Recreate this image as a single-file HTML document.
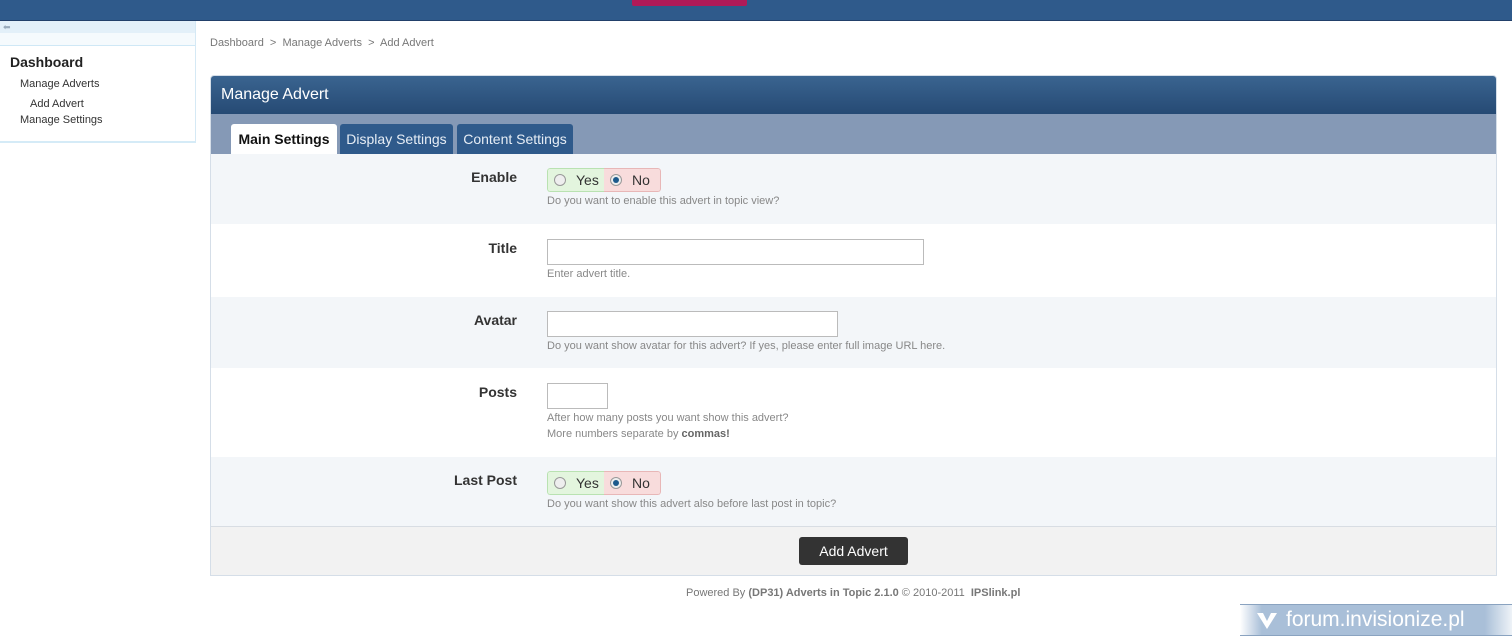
<!DOCTYPE html>
<html><head><style>
*{margin:0;padding:0;box-sizing:border-box}
body{width:1512px;height:638px;overflow:hidden;background:#fff;font-family:"Liberation Sans",Arial,sans-serif;position:relative;color:#333}
.top{position:absolute;left:0;top:0;width:1512px;height:21px;background:#2f5a8b;border-bottom:1px solid #22406a}
.pink{position:absolute;left:632px;top:0;width:115px;height:6px;background:#b01a58;border-radius:0 0 2px 2px}
.side{position:absolute;left:0;top:21px;width:196px;height:122px;border-right:1px solid #d5e9f5;border-bottom:2px solid #d5ebf7}
.strip{height:12px;background:#e3f0f9;font-size:9px;color:#9ab;padding-left:3px;line-height:12px}
.strip2{height:13px;background:#f5fafd;border-bottom:1px solid #cfe8f6}
.side h3{font-size:14px;font-weight:bold;margin:8px 0 0 10px;color:#222}
.side a{display:block;font-size:11px;color:#333;text-decoration:none}
.crumb{position:absolute;left:210px;top:37px;font-size:11px;color:#777}
.panel{position:absolute;left:210px;top:75px;width:1287px;height:501px;border:1px solid #d5dee8;border-radius:4px 4px 0 0;overflow:hidden}
.hd{height:38px;background:linear-gradient(#3a6490,#264a74);color:#fff;font-size:16px;line-height:38px;padding-left:10px}
.tabs{height:40px;background:#8599b6;position:relative}
.tab{position:absolute;top:10px;height:30px;border-radius:3px 3px 0 0;background:#2f5a8b;color:#e6edf5;font-size:14px;line-height:30px;text-align:center}
.tab.on{background:#fff;color:#111;font-weight:bold}
.row{position:relative;border-bottom:1px solid #fff}
.row.l{background:#f3f6f9}
.lab{position:absolute;right:979px;top:15px;font-size:14px;font-weight:bold;color:#333}
.fld{position:absolute;left:336px;top:14px}
.desc{font-size:11px;color:#888;margin-top:1px;line-height:16px}
.yn{display:flex;height:24px;border-radius:3px;overflow:hidden;width:114px;font-size:14px}
.yn div{display:flex;align-items:center;height:24px}
.y{background:#e3f5de;border:1px solid #b9e2b1;border-right:none;width:57px;border-radius:3px 0 0 3px}
.n{background:#f8dcdc;border:1px solid #e8b7b7;border-left:none;width:57px;border-radius:0 3px 3px 0}
.r{width:12px;height:12px;border-radius:50%;border:1px solid #999;background:#eee;margin:0 10px 0 6px;position:relative}
.r.c::after{content:"";position:absolute;left:2px;top:2px;width:6px;height:6px;border-radius:50%;background:#1c5a8c}
input{display:block;height:26px;border:1px solid #bbb;background:#fff}
.foot{position:absolute;left:0;top:450px;width:100%;height:50px;background:#f2f2f2;border-top:1px solid #d8dde3}
.btn{position:absolute;left:588px;top:10px;width:109px;height:28px;background:#333;border-radius:3px;color:#fff;font-size:14px;text-align:center;line-height:28px}
.pw{position:absolute;left:686px;top:587px;font-size:11px;color:#777}
.logo{position:absolute;left:1240px;top:604px;width:272px;height:32px;background:linear-gradient(90deg,rgba(160,185,210,0),#a9bfd8 8%,#a9bfd8 90%,rgba(200,215,230,.3));border-top:1px solid #8aa3c0;border-bottom:1px solid #8aa3c0;color:#fff;font-size:21px;line-height:30px;padding-left:46px}
</style></head><body>
<div class="top"><div class="pink"></div></div>
<div class="side"><div class="strip">&#x2B05;</div><div class="strip2"></div>
<h3>Dashboard</h3>
<a style="margin:8px 0 0 20px">Manage Adverts</a>
<a style="margin:8px 0 0 30px">Add Advert</a>
<a style="margin:4px 0 0 20px">Manage Settings</a></div>
<div class="crumb">Dashboard &nbsp;&gt;&nbsp; Manage Adverts &nbsp;&gt;&nbsp; Add Advert</div>
<div class="panel">
<div class="hd">Manage Advert</div>
<div class="tabs"><div class="tab on" style="left:20px;width:106px">Main Settings</div><div class="tab" style="left:129px;width:113px">Display Settings</div><div class="tab" style="left:246px;width:116px">Content Settings</div></div>
<div class="row l" style="height:71px"><div class="lab">Enable</div><div class="fld"><div class="yn"><div class="y"><span class="r"></span>Yes</div><div class="n"><span class="r c"></span>No</div></div><div class="desc">Do you want to enable this advert in topic view?</div></div></div>
<div class="row" style="height:72px"><div class="lab">Title</div><div class="fld"><input style="width:377px"><div class="desc">Enter advert title.</div></div></div>
<div class="row l" style="height:72px"><div class="lab">Avatar</div><div class="fld"><input style="width:291px"><div class="desc">Do you want show avatar for this advert? If yes, please enter full image URL here.</div></div></div>
<div class="row" style="height:88px"><div class="lab">Posts</div><div class="fld"><input style="width:61px"><div class="desc">After how many posts you want show this advert?<br>More numbers separate by <b style="color:#666">commas!</b></div></div></div>
<div class="row l" style="height:70px"><div class="lab">Last Post</div><div class="fld"><div class="yn"><div class="y"><span class="r"></span>Yes</div><div class="n"><span class="r c"></span>No</div></div><div class="desc">Do you want show this advert also before last post in topic?</div></div></div>
<div class="foot"><div class="btn">Add Advert</div></div>
</div>
<div class="pw">Powered By <b>(DP31) Adverts in Topic 2.1.0</b> © 2010-2011 &nbsp;<b>IPSlink.pl</b></div>
<div class="logo"><svg style="position:absolute;left:16px;top:7px" width="22" height="18" viewBox="0 0 22 18"><path d="M1 1h6l4 8 4-8h6L11 17z" fill="#fff"/></svg>forum.invisionize.pl</div>
</body></html>
